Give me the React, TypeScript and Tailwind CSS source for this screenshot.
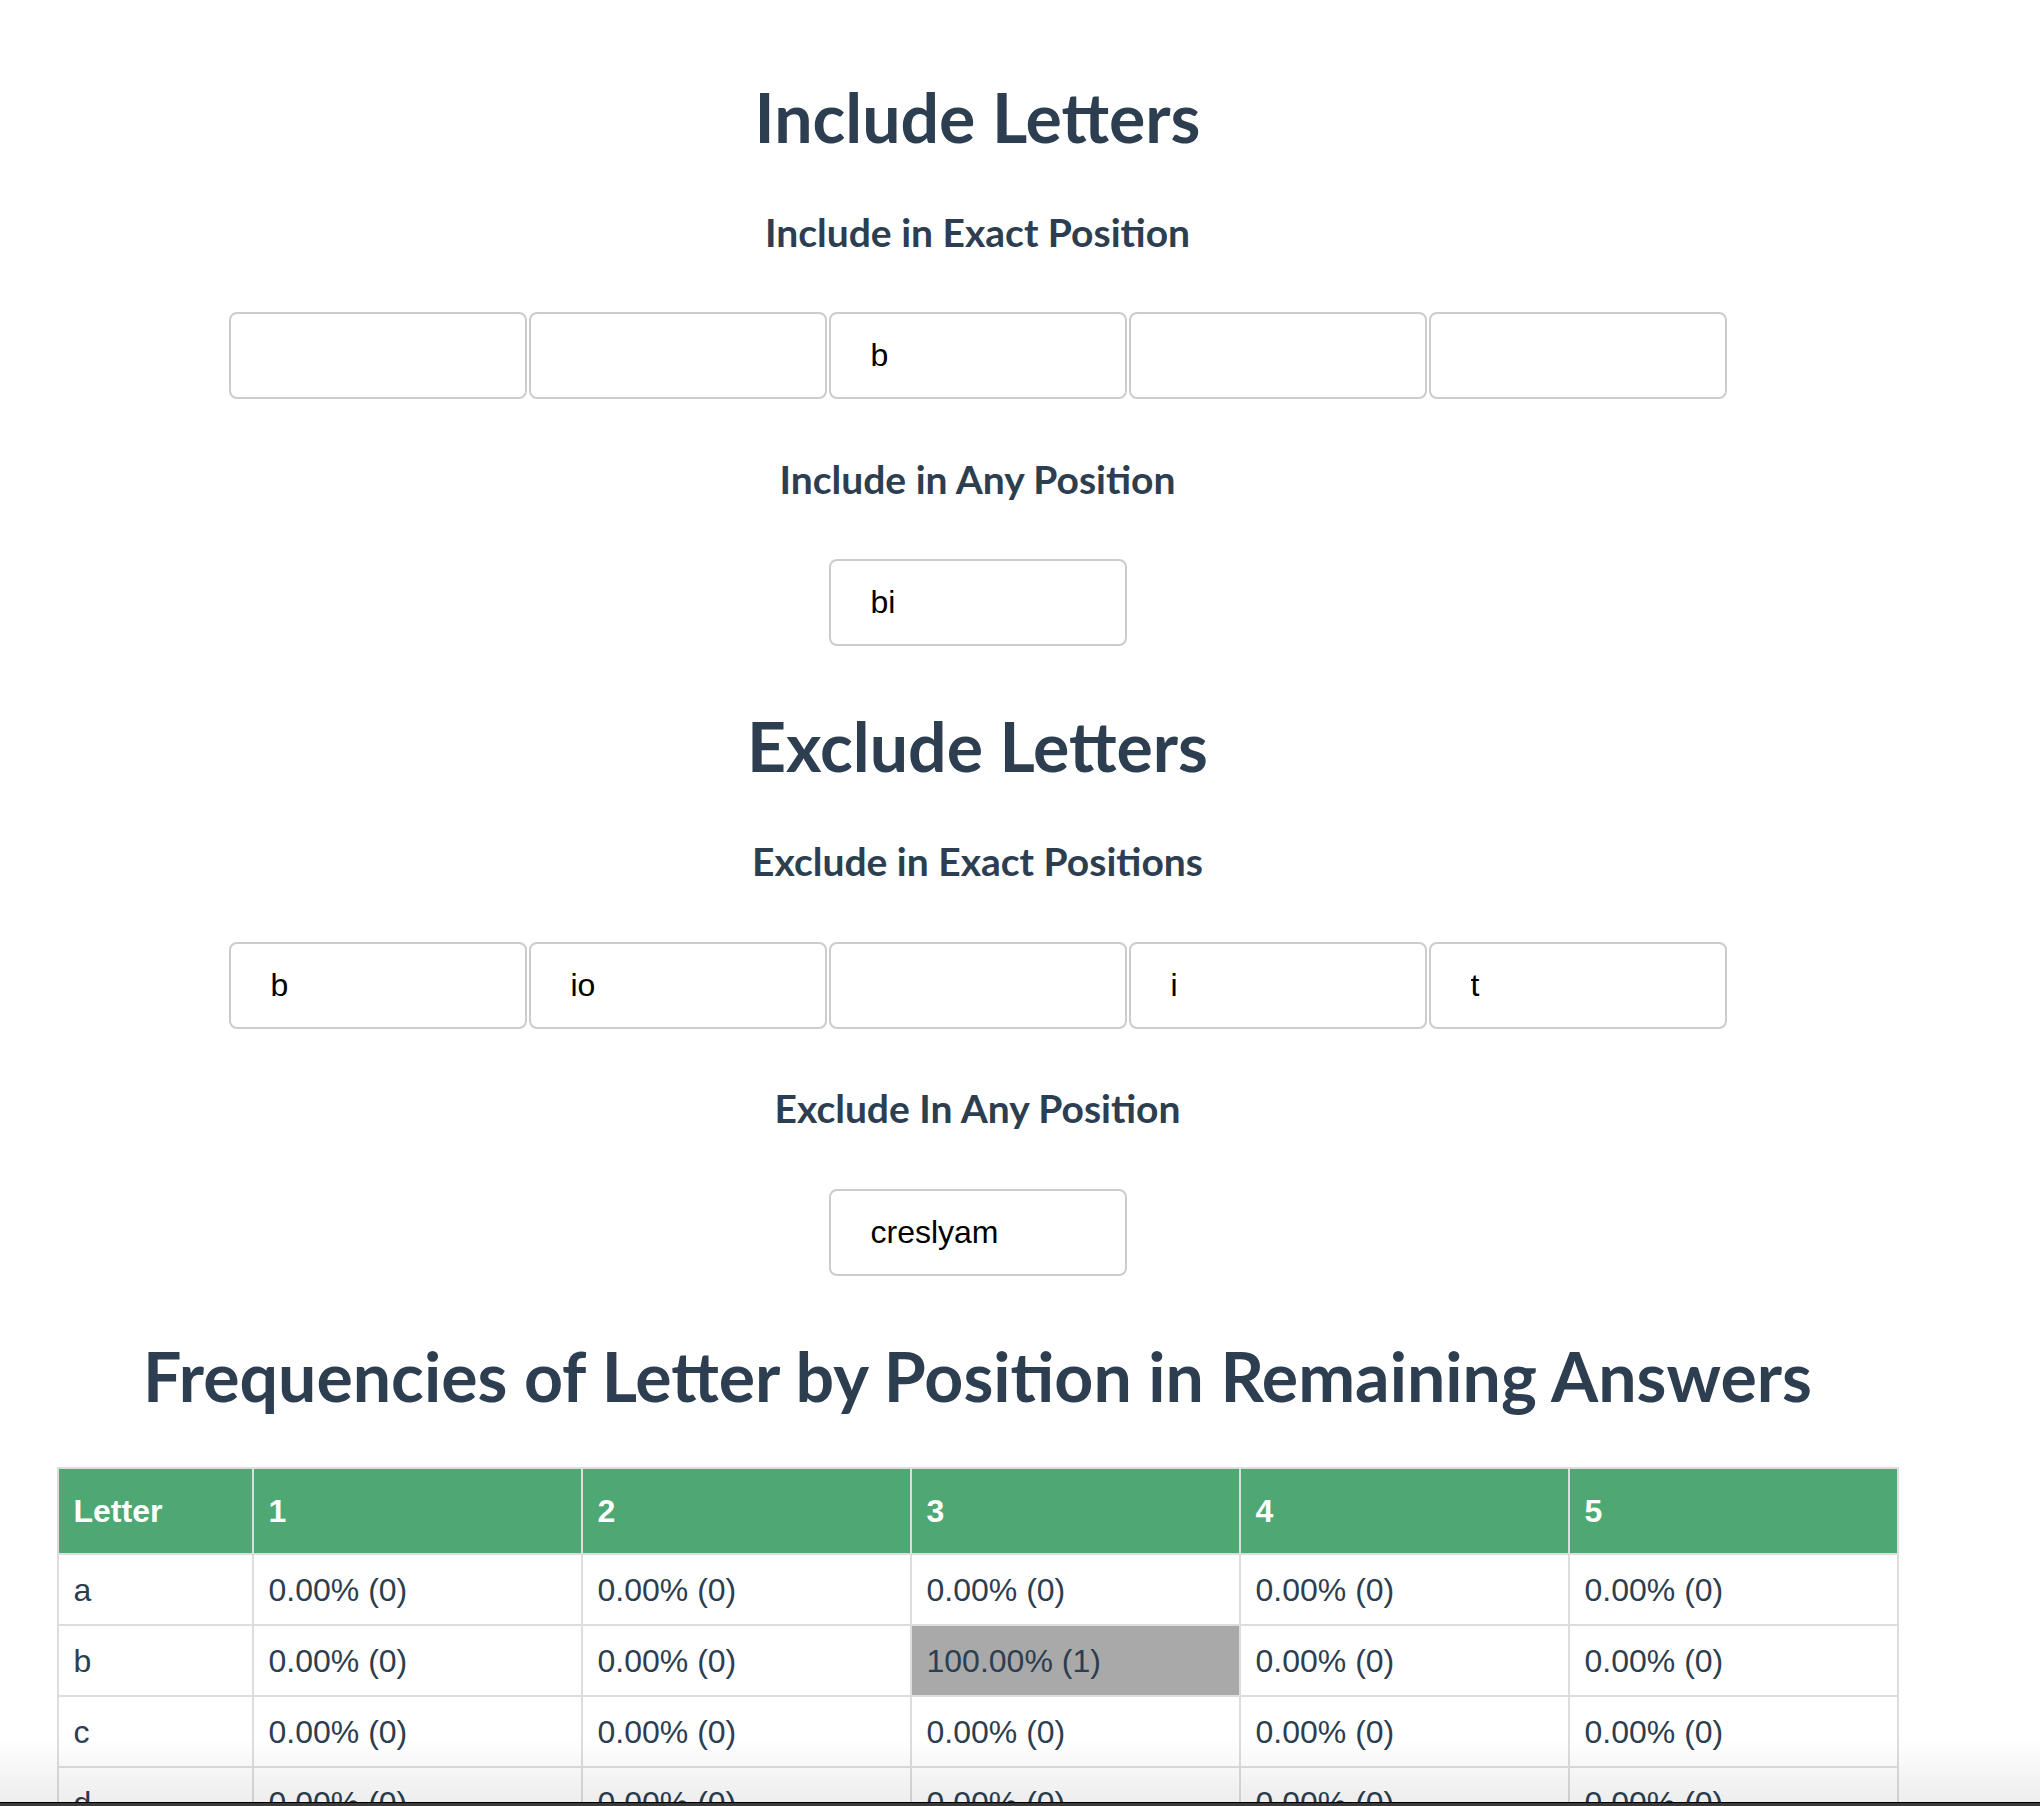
import React from "react";

const heading = "font-[Lato,sans-serif] font-bold text-[#2c3e50] text-center whitespace-nowrap";
const inputCls =
  "w-[298px] h-[87px] border-2 border-[#cccccc] rounded-[8px] pl-[40px] font-['Liberation_Sans',Arial,sans-serif] text-[32px] text-black outline-none bg-white";

const letters = "abcdefghijklmnopqrstuvwxyz".split("");

const LetterRow = ({ values }: { values: string[] }) => (
  <div className="flex gap-[2px]">
    {values.map((v, i) => (
      <input key={i} defaultValue={v} className={inputCls} />
    ))}
  </div>
);

const App = () => {
  return (
    <div className="relative h-[1806px] overflow-hidden bg-white">
      <div className="w-[1955px] flex flex-col items-center">
        <h1 className={`${heading} mt-[67px] h-[100px] leading-[100px] text-[68px]`}>Include Letters</h1>
        <h3 className={`${heading} mt-[35px] h-[60px] leading-[60px] text-[39px]`}>Include in Exact Position</h3>
        <div className="mt-[50px]">
          <LetterRow values={["", "", "b", "", ""]} />
        </div>
        <h3 className={`${heading} mt-[50px] h-[60px] leading-[60px] text-[39px]`}>Include in Any Position</h3>
        <input defaultValue="bi" className={`${inputCls} mt-[50px]`} />

        <h1 className={`${heading} mt-[50px] h-[100px] leading-[100px] text-[68px]`}>Exclude Letters</h1>
        <h3 className={`${heading} mt-[35px] h-[60px] leading-[60px] text-[39px]`}>Exclude in Exact Positions</h3>
        <div className="mt-[51px]">
          <LetterRow values={["b", "io", "", "i", "t"]} />
        </div>
        <h3 className={`${heading} mt-[49px] h-[60px] leading-[60px] text-[39px]`}>Exclude In Any Position</h3>
        <input defaultValue="creslyam" className={`${inputCls} mt-[51px]`} />

        <h1 className={`${heading} mt-[50px] h-[100px] leading-[100px] text-[68px]`}>
          Frequencies of Letter by Position in Remaining Answers
        </h1>

        <table className="mt-[41px] w-[1842px] table-fixed border-collapse font-['Liberation_Sans',Arial,sans-serif] text-[32px] text-[#2c3e50]">
          <colgroup>
            <col className="w-[195px]" />
            <col />
            <col />
            <col />
            <col />
            <col />
          </colgroup>
          <thead>
            <tr className="h-[86px] bg-[#4ea873]">
              {["Letter", "1", "2", "3", "4", "5"].map((h) => (
                <th key={h} className="border-2 border-[#dddddd] px-[15px] text-left font-bold text-white">
                  {h}
                </th>
              ))}
            </tr>
          </thead>
          <tbody>
            {letters.map((l) => (
              <tr key={l} className="h-[71px]">
                <td className="border-2 border-[#dddddd] px-[15px]">{l}</td>
                {[1, 2, 3, 4, 5].map((pos) => {
                  const hit = l === "b" && pos === 3;
                  return (
                    <td
                      key={pos}
                      className={`border-2 border-[#dddddd] px-[15px] ${hit ? "bg-[#a9a9a9]" : ""}`}
                    >
                      {hit ? "100.00% (1)" : "0.00% (0)"}
                    </td>
                  );
                })}
              </tr>
            ))}
          </tbody>
        </table>
      </div>

      {/* window shadow and bottom edge */}
      <div className="absolute left-0 right-0 bottom-[4px] h-[64px] bg-linear-to-b from-black/0 to-black/[0.07]" />
      <div className="absolute left-0 right-0 bottom-0 h-[4px] border-t border-black bg-[#3a3a3a]" />
    </div>
  );
};

export default App;
